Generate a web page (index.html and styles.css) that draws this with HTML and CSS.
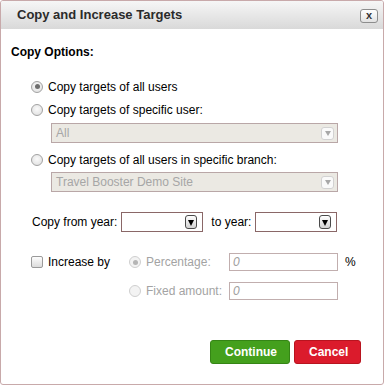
FILE: index.html
```html
<!DOCTYPE html>
<html>
<head>
<meta charset="utf-8">
<link rel="stylesheet" href="styles.css">
</head>
<body>
<div class="dialog">
  <div class="titlebar">
    <span class="title">Copy and Increase Targets</span>
    <span class="close">x</span>
  </div>
  <div class="content">
    <div class="heading">Copy Options:</div>
    <div class="opt-row first"><span class="radio checked"></span><span class="lbl">Copy targets of all users</span></div>
    <div class="opt-row"><span class="radio"></span><span class="lbl">Copy targets of specific user:</span></div>
    <div class="select disabled sel1"><span class="sel-text">All</span><span class="arrow"></span></div>
    <div class="opt-row r3"><span class="radio"></span><span class="lbl">Copy targets of all users in specific branch:</span></div>
    <div class="select disabled sel2"><span class="sel-text">Travel Booster Demo Site</span><span class="arrow"></span></div>
    <div class="year-row">
      <span class="lbl">Copy from year:</span>
      <div class="select year"><span class="arrow"></span></div>
      <span class="lbl to">to year:</span>
      <div class="select year"><span class="arrow"></span></div>
    </div>
    <div class="inc-grid">
      <div class="inc-check"><span class="checkbox"></span><span class="lbl">Increase by</span></div>
      <div class="inc-opt"><span class="radio checked dis"></span><span class="lbl grey">Percentage:</span></div>
      <div class="input">0</div>
      <span class="pct">%</span>
      <div></div>
      <div class="inc-opt"><span class="radio dis"></span><span class="lbl grey">Fixed amount:</span></div>
      <div class="input">0</div>
      <span></span>
    </div>
    <div class="buttons">
      <span class="btn green">Continue</span>
      <span class="btn red">Cancel</span>
    </div>
  </div>
</div>
</body>
</html>
```

FILE: styles.css
```css
html, body {
  margin: 0;
  padding: 0;
  background: #fff;
}
body {
  width: 384px;
  height: 385px;
  font-family: "Liberation Sans", Arial, sans-serif;
  font-size: 12px;
  color: #000;
}
.dialog {
  box-sizing: border-box;
  width: 384px;
  height: 385px;
  border: 1px solid #c8a9aa;
  border-radius: 3px;
  background: #fff;
  overflow: hidden;
}
.titlebar {
  height: 28px;
  display: flex;
  align-items: center;
  justify-content: space-between;
  padding: 0 5px 0 16px;
  background: linear-gradient(#f6f6f6, #d9d9d9);
}
.title {
  font-weight: bold;
  font-size: 13px;
  color: #2b2b2b;
  margin-top: -1px;
}
.close {
  box-sizing: border-box;
  width: 18px;
  height: 14px;
  border: 1px solid #8d8d8d;
  border-radius: 3px;
  background: linear-gradient(#ffffff, #e2e2e2);
  font-size: 11px;
  font-weight: bold;
  line-height: 11px;
  text-align: center;
  color: #333;
  margin-top: 1px;
}
.content {
  padding: 15px 0 0 10px;
}
.heading {
  font-weight: bold;
  height: 16px;
  line-height: 16px;
  margin-bottom: 15px;
}
.opt-row {
  height: 23px;
  display: flex;
  align-items: center;
  padding-left: 20px;
}
.opt-row.r3 {
  margin-top: 5px;
}
.radio {
  box-sizing: border-box;
  width: 12px;
  height: 12px;
  border-radius: 50%;
  border: 1px solid #a2a2a2;
  background: radial-gradient(circle at 50% 40%, #fafafa, #dcdcdc);
  margin-right: 5px;
  position: relative;
  flex: none;
}
.radio.checked::after {
  content: "";
  position: absolute;
  left: 2.5px;
  top: 2.5px;
  width: 5px;
  height: 5px;
  border-radius: 50%;
  background: #6e6e6e;
}
.radio.dis {
  border-color: #cfcfcf;
  background: #f3f3f3;
}
.radio.dis.checked::after {
  background: #b5b5b5;
}
.checkbox {
  box-sizing: border-box;
  width: 12px;
  height: 12px;
  border-radius: 2px;
  border: 1px solid #9a9a9a;
  background: linear-gradient(#fdfdfd, #dcdcdc);
  margin-right: 5px;
  flex: none;
}
.select {
  box-sizing: border-box;
  height: 20px;
  display: flex;
  align-items: center;
  justify-content: space-between;
  border: 1px solid #b9a7a7;
  padding: 0 3px 0 4px;
}
.select.disabled {
  background: #ebe9e3;
  color: #a6a6a6;
  margin-left: 40px;
  width: 287px;
}
.sel1 {
  margin-top: 2px;
}
.sel2 {
  margin-top: 1px;
}
.select.disabled .arrow {
  box-sizing: border-box;
  width: 13px;
  height: 13px;
  border: 1px solid #d2d2d2;
  border-radius: 3px;
  background: #fafafa;
  display: flex;
  align-items: center;
  justify-content: center;
}
.select.disabled .arrow::after {
  content: "";
  border-left: 3px solid transparent;
  border-right: 3px solid transparent;
  border-top: 5px solid #a8a8a8;
  margin-top: 1px;
}
.year-row {
  margin-top: 20px;
  height: 20px;
  display: flex;
  align-items: center;
  padding-left: 21px;
}
.select.year {
  width: 82px;
  border-color: #8a6767;
  background: #fff;
  margin-left: 4px;
  justify-content: flex-end;
  padding-right: 5px;
}
.select.year .arrow {
  box-sizing: border-box;
  width: 12px;
  height: 14px;
  border: 1px solid #4a4a4a;
  border-radius: 3px;
  background: linear-gradient(#ffffff, #d2d2d2);
  display: flex;
  align-items: center;
  justify-content: center;
}
.select.year .arrow::after {
  content: "";
  border-left: 3px solid transparent;
  border-right: 3px solid transparent;
  border-top: 6px solid #000;
  margin-top: 1px;
}
.to {
  margin-left: 8px;
}
.inc-grid {
  margin-top: 21px;
  margin-left: 20px;
  display: grid;
  grid-template-columns: 98px 100px 109px auto;
  grid-template-rows: 18px 18px;
  row-gap: 11px;
  align-items: center;
}
.inc-check, .inc-opt {
  display: flex;
  align-items: center;
}
.grey {
  color: #a3a3a3;
}
.input {
  box-sizing: border-box;
  height: 18px;
  width: 109px;
  border: 1px solid #c1aeae;
  padding-left: 3px;
  font-style: italic;
  color: #9e9e9e;
  line-height: 16px;
}
.pct {
  margin-left: 7px;
}
.buttons {
  margin-top: 40px;
  display: flex;
  justify-content: flex-end;
  gap: 4px;
  padding-right: 22px;
}
.btn {
  box-sizing: border-box;
  height: 24px;
  line-height: 22px;
  padding: 0 14px;
  border-radius: 3px;
  color: #fff;
  font-weight: bold;
  font-size: 12px;
}
.btn.green {
  background: #44a01d;
  border: 1px solid #358515;
  width: 80px;
  text-align: center;
}
.btn.red {
  background: #db1b2c;
  border: 1px solid #b8141f;
  width: 67px;
  text-align: center;
}
```
